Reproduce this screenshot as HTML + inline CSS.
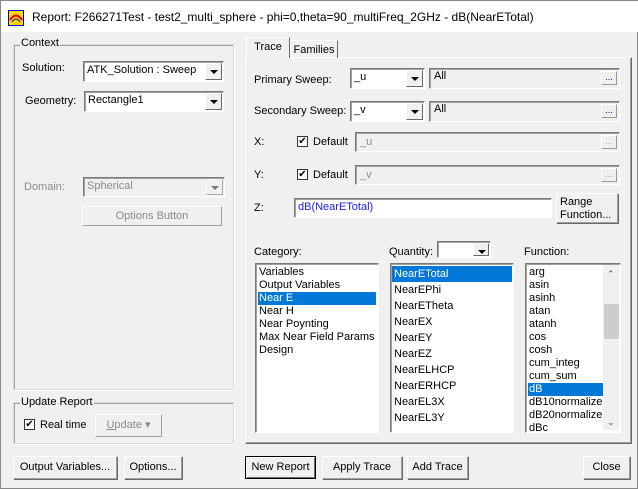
<!DOCTYPE html><html><head><style>
*{box-sizing:border-box;margin:0;padding:0}
body{width:638px;height:489px;background:#f0f0f0;font-family:"Liberation Sans",sans-serif;font-size:11px;color:#000;position:relative;overflow:hidden;border:1px solid #888}
.a{position:absolute;white-space:nowrap}
.grp{position:absolute;border:1px solid #dcdcdc;box-shadow:inset 1px 1px 0 #a0a0a0,1px 1px 0 #fff}
.gl{position:absolute;background:#f0f0f0;padding:0 1px;font-size:11px}
.cb{position:absolute;background:#fff;border:1px solid #7a7a7a;border-right-color:#fff;border-bottom-color:#fff;box-shadow:inset 1px 1px 0 #a0a0a0;padding:0 3px;line-height:17px;font-size:11px}
.dd{position:absolute;right:1px;top:1px;bottom:1px;width:17px;background:#f0f0f0;border:1px solid #fff;border-right-color:#696969;border-bottom-color:#696969}
.dd:after{content:"";position:absolute;left:4px;top:6px;border-left:4px solid transparent;border-right:4px solid transparent;border-top:4px solid #000}
.btn{position:absolute;background:#f0f0f0;border:1px solid #fff;border-right-color:#a0a0a0;border-bottom-color:#a0a0a0;box-shadow:1px 1px 0 #696969;text-align:center;font-size:11px;line-height:21px}
.tb{position:absolute;background:#f0f0f0;border:1px solid #7a7a7a;border-right-color:#fff;border-bottom-color:#fff;box-shadow:inset 1px 1px 0 #a0a0a0;padding:0 4px;line-height:15px}
.el{position:absolute;right:2px;top:2px;width:16px;height:14px;background:#f0f0f0;border:1px solid #fff;border-right-color:#999;border-bottom-color:#999;color:#00f;font-size:9px;text-align:center;line-height:10px}
.lb{position:absolute;background:#fff;border:1px solid #7a7a7a;border-right-color:#fff;border-bottom-color:#fff;box-shadow:inset 1px 1px 0 #a0a0a0;padding:2px;overflow:hidden}
.lb div{padding-left:1px;white-space:nowrap}
.sel{background:#0078d7;color:#fff}
.chk{position:absolute;width:11px;height:11px;background:#fff;border:1px solid #333;font-size:10px;line-height:9px;text-align:center}
.gray{color:#8a8a8a}
</style></head><body>
<div class="a" style="left:0;top:0;width:638px;height:31px;background:#fff"></div>
<svg class="a" style="left:7px;top:9px" width="16" height="16"><rect x="0.5" y="0.5" width="15" height="15" fill="#ffd800" stroke="#00c"/><path d="M2 10 Q8 1 14 10" stroke="#e00" stroke-width="2" fill="none"/><path d="M4 12 Q8 6 12 12" stroke="#00c" fill="none"/></svg>
<div class="a" style="left:31px;top:9px;font-size:12px">Report: F266271Test - test2_multi_sphere - phi=0,theta=90_multiFreq_2GHz - dB(NearETotal)</div>

<div class="grp" style="left:12px;top:43px;width:221px;height:346px"></div>
<div class="gl" style="left:19px;top:36px">Context</div>
<div class="a" style="left:21px;top:61px">Solution:</div>
<div class="cb" style="left:82px;top:60px;width:141px;height:21px">ATK_Solution : Sweep<div class="dd"></div></div>
<div class="a" style="left:24px;top:94px">Geometry:</div>
<div class="cb" style="left:83px;top:90px;width:140px;height:21px">Rectangle1<div class="dd"></div></div>
<div class="a gray" style="left:23px;top:180px">Domain:</div>
<div class="cb gray" style="left:82px;top:176px;width:142px;height:20px;background:#f0f0f0">Spherical<div class="dd" style="opacity:.5"></div></div>
<div class="btn gray" style="left:81px;top:205px;width:140px;height:20px;line-height:18px;box-shadow:none">Options Button</div>

<div class="grp" style="left:12px;top:401px;width:221px;height:42px"></div>
<div class="gl" style="left:19px;top:395px">Update Report</div>
<div class="chk" style="left:23px;top:418px">✔</div>
<div class="a" style="left:39px;top:418px">Real time</div>
<div class="btn gray" style="left:94px;top:413px;width:67px;height:23px;box-shadow:none"><u>U</u>pdate ▾</div>

<div class="btn" style="left:12px;top:455px;width:104px;height:23px">Output Variables...</div>
<div class="btn" style="left:123px;top:455px;width:58px;height:23px">Options...</div>

<div class="a" style="left:244px;top:56px;width:387px;height:387px;border:1px solid #fff;border-right-color:#696969;border-bottom-color:#696969;box-shadow:inset -1px -1px 0 #a0a0a0"></div>
<div class="a" style="left:289px;top:39px;width:48px;height:18px;border:1px solid #fff;border-right-color:#696969;border-bottom:none;text-align:center;line-height:18px">Families</div>
<div class="a" style="left:245px;top:36px;width:44px;height:21px;background:#f0f0f0;border:1px solid #fff;border-right-color:#696969;border-bottom:none;text-align:center;line-height:18px">Trace</div>

<div class="a" style="left:253px;top:73px">Primary Sweep:</div>
<div class="cb" style="left:349px;top:67px;width:75px;height:21px">_u<div class="dd"></div></div>
<div class="tb" style="left:428px;top:67px;width:191px;height:21px">All<div class="el">...</div></div>
<div class="a" style="left:253px;top:104px">Secondary Sweep:</div>
<div class="cb" style="left:349px;top:100px;width:75px;height:21px">_v<div class="dd"></div></div>
<div class="tb" style="left:428px;top:100px;width:191px;height:21px">All<div class="el">...</div></div>

<div class="a" style="left:253px;top:135px">X:</div>
<div class="chk" style="left:296px;top:135px">✔</div>
<div class="a" style="left:312px;top:135px">Default</div>
<div class="tb gray" style="left:354px;top:131px;width:265px;height:20px;line-height:18px">_u<div class="el gray" style="color:#aaa">...</div></div>
<div class="a" style="left:253px;top:168px">Y:</div>
<div class="chk" style="left:296px;top:168px">✔</div>
<div class="a" style="left:312px;top:168px">Default</div>
<div class="tb gray" style="left:354px;top:164px;width:265px;height:20px;line-height:18px">_v<div class="el gray" style="color:#aaa">...</div></div>

<div class="a" style="left:253px;top:201px">Z:</div>
<div class="cb" style="left:293px;top:197px;width:258px;height:20px;color:#1a1aff">dB(NearETotal)</div>
<div class="btn" style="left:555px;top:192px;width:62px;height:30px;line-height:13px;text-align:left;padding:2px 0 0 3px">Range<br>Function...</div>

<div class="a" style="left:253px;top:245px">Category:</div>
<div class="lb" style="left:254px;top:262px;width:124px;height:170px;line-height:13px">
<div>Variables</div><div>Output Variables</div><div class="sel">Near E</div><div>Near H</div><div>Near Poynting</div><div>Max Near Field Params</div><div>Design</div></div>
<div class="a" style="left:388px;top:245px">Quantity:</div>
<div class="cb" style="left:436px;top:240px;width:54px;height:17px"><div class="dd" style="width:16px"></div></div>
<div class="lb" style="left:389px;top:262px;width:124px;height:170px;line-height:16px">
<div class="sel" style="width:120px;margin-left:-1px;padding-left:2px">NearETotal</div><div>NearEPhi</div><div>NearETheta</div><div>NearEX</div><div>NearEY</div><div>NearEZ</div><div>NearELHCP</div><div>NearERHCP</div><div>NearEL3X</div><div>NearEL3Y</div></div>
<div class="a" style="left:523px;top:245px">Function:</div>
<div class="lb" style="left:524px;top:262px;width:96px;height:170px;line-height:13px">
<div>arg</div><div>asin</div><div>asinh</div><div>atan</div><div>atanh</div><div>cos</div><div>cosh</div><div>cum_integ</div><div>cum_sum</div><div class="sel" style="width:76px">dB</div><div>dB10normalize</div><div>dB20normalize</div><div>dBc</div>
<div class="a" style="left:77px;top:1px;width:16px;height:165px;background:#f0f0f0"></div>
<div class="a" style="left:78px;top:40px;width:15px;height:35px;background:#cdcdcd"></div>
<div class="a" style="left:80px;top:4px;font-size:9px;color:#555">⌃</div>
<div class="a" style="left:80px;top:152px;font-size:9px;color:#555">⌄</div>
</div>

<div class="btn" style="left:244px;top:455px;width:71px;height:23px;border:1px solid #000;box-shadow:inset 1px 1px 0 #fff,inset -1px -1px 0 #696969">New Report</div>
<div class="btn" style="left:321px;top:455px;width:80px;height:23px">Apply Trace</div>
<div class="btn" style="left:406px;top:455px;width:61px;height:23px">Add Trace</div>
<div class="btn" style="left:582px;top:455px;width:47px;height:23px">Close</div>
</body></html>
